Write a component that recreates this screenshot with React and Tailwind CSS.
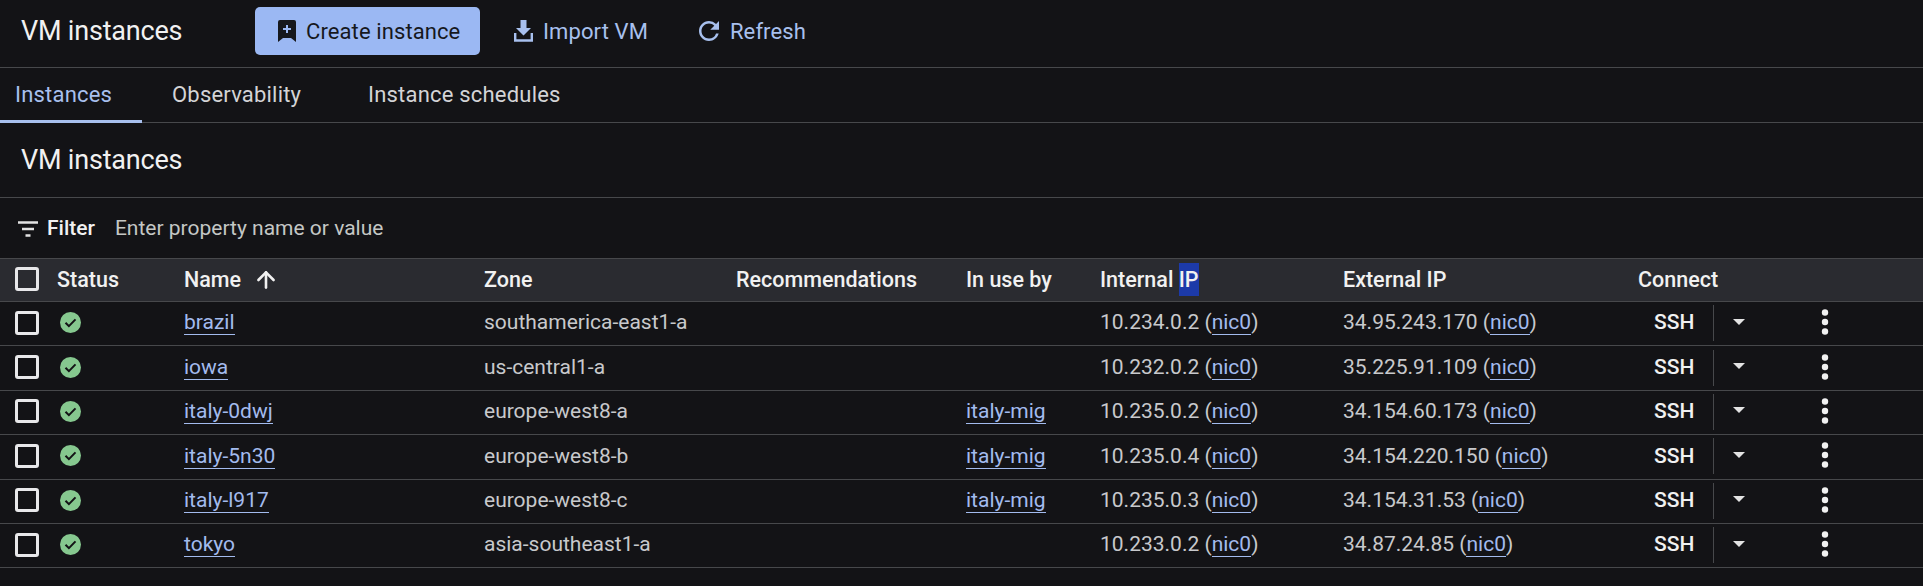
import { ArrowUp } from "lucide-react";

const rows = [
  { name: "brazil", zone: "southamerica-east1-a", inUse: "", internal: "10.234.0.2", external: "34.95.243.170" },
  { name: "iowa", zone: "us-central1-a", inUse: "", internal: "10.232.0.2", external: "35.225.91.109" },
  { name: "italy-0dwj", zone: "europe-west8-a", inUse: "italy-mig", internal: "10.235.0.2", external: "34.154.60.173" },
  { name: "italy-5n30", zone: "europe-west8-b", inUse: "italy-mig", internal: "10.235.0.4", external: "34.154.220.150" },
  { name: "italy-l917", zone: "europe-west8-c", inUse: "italy-mig", internal: "10.235.0.3", external: "34.154.31.53" },
  { name: "tokyo", zone: "asia-southeast1-a", inUse: "", internal: "10.233.0.2", external: "34.87.24.85" },
];

const cols = "grid grid-cols-[57px_127px_300px_252px_230px_134px_243px_295px_1fr] items-center";

function Checkbox() {
  return <div className="absolute left-[15px] top-1/2 -mt-[13px] w-6 h-6 rounded-[3px] border-[3px] border-[#e8e8ea]" />;
}

function StatusIcon() {
  return (
    <svg width="21" height="21" viewBox="0 0 21 21" className="ml-[3px] -mt-[1px]">
      <circle cx="10.5" cy="10.5" r="10.5" fill="#86c88f" />
      <path d="M5.5 10.8l3.4 3.4 6.6-6.8" fill="none" stroke="#131316" strokeWidth="2" />
    </svg>
  );
}

function LinkText({ children }) {
  return <span className="text-[#a3bbee] border-b border-[#a3bbee] leading-[24px] inline-block">{children}</span>;
}

export default function App() {
  return (
    <div className="w-[1923px] h-[586px] overflow-hidden bg-[#131316] text-[#e3e3e3] font-['Roboto',sans-serif]">
      <div className="h-[68px] pb-[5px] border-b border-[#47484b] flex items-center">
        <h1 className="ml-[21px] w-[234px] text-[27px] tracking-[-0.2px] text-[#f1f1f1]">VM instances</h1>
        <button className="w-[225px] h-[48px] rounded-[5px] bg-[#9bb8f3] flex items-center pl-[22px] gap-[9px] text-[#16181d] text-[22px] tracking-[0.1px]">
          <svg width="20" height="24" viewBox="0 0 20 24">
            <path d="M3 1h14a2 2 0 0 1 2 2v20l-5-4H6l-5 4V3a2 2 0 0 1 2-2z" fill="#16181d" />
            <path d="M10 6v8M6 10h8" stroke="#9bb8f3" strokeWidth="2" />
          </svg>
          Create instance
        </button>
        <div className="ml-[34px] flex items-center gap-[10px] text-[#a8c0ee] text-[22px] tracking-[0.1px]">
          <svg width="19" height="22" viewBox="0 0 19 22" fill="#a8c0ee">
            <path d="M6.5 0h6v8h4.5l-7.5 7.5L2 8h4.5z" />
            <path d="M1.2 13v7.5h16.6V13" fill="none" stroke="#a8c0ee" strokeWidth="2.4" />
          </svg>
          Import VM
        </div>
        <div className="ml-[46px] flex items-center gap-[6px] text-[#a8c0ee] text-[22px] tracking-[0.1px]">
          <svg width="30" height="30" viewBox="0 0 24 24" fill="#a8c0ee">
            <path d="M17.65 6.35A7.958 7.958 0 0 0 12 4c-4.42 0-7.99 3.58-7.99 8s3.57 8 7.99 8c3.73 0 6.84-2.55 7.73-6h-2.08A5.99 5.99 0 0 1 12 18c-3.31 0-6-2.69-6-6s2.69-6 6-6c1.66 0 3.14.69 4.22 1.78L13 11h7V4l-2.35 2.35z" />
          </svg>
          Refresh
        </div>
      </div>

      <div className="h-[55px] border-b border-[#47484b] flex text-[22px] tracking-[0.2px]">
        <div className="w-[142px] h-[55px] border-b-[3px] border-[#a8c0ee] pl-[15px] pt-[10px] text-[#a8c0ee]">Instances</div>
        <div className="ml-[30px] w-[196px] pt-[10px] text-[#d4d4d6]">Observability</div>
        <div className="pt-[10px] text-[#d4d4d6]">Instance schedules</div>
      </div>

      <div className="h-[75px] border-b border-[#47484b] flex items-center pl-[21px] text-[27px] tracking-[-0.2px] text-[#f1f1f1]">
        VM instances
      </div>

      <div className="h-[60px] pt-[1px] flex items-center pl-[18px]">
        <svg width="20" height="16" viewBox="0 0 20 16">
          <path d="M0 1.5h20M4 8h12M7.5 14.5h5" stroke="#e3e3e3" strokeWidth="2.6" />
        </svg>
        <span className="ml-[9px] text-[21px] font-medium text-[#f1f1f1]">Filter</span>
        <span className="ml-[20px] text-[21px] text-[#c4c7c5]">Enter property name or value</span>
      </div>

      <div className={`${cols} relative h-[44px] bg-[#2a2b30] border-y border-[#47484b] text-[21.5px] font-medium text-[#f1f1f1]`}>
        <Checkbox />
        <div />
        <div>Status</div>
        <div className="flex items-center gap-[12px]">
          Name <ArrowUp size={26} strokeWidth={2.4} />
        </div>
        <div>Zone</div>
        <div>Recommendations</div>
        <div>In use by</div>
        <div>
          Internal <span className="bg-[#1c3aa9] py-[4px]">IP</span>
        </div>
        <div>External IP</div>
        <div>Connect</div>
      </div>

      {rows.map((r) => (
        <div key={r.name} className={`${cols} relative h-[44.4px] pb-[1px] border-b border-[#47484b] text-[21px] text-[#c8c9cc]`}>
          <Checkbox />
          <div />
          <div><StatusIcon /></div>
          <div><LinkText>{r.name}</LinkText></div>
          <div>{r.zone}</div>
          <div />
          <div>{r.inUse && <LinkText>{r.inUse}</LinkText>}</div>
          <div>
            {r.internal} (<LinkText>nic0</LinkText>)
          </div>
          <div>
            {r.external} (<LinkText>nic0</LinkText>)
          </div>
          <div className="flex items-center pl-[16px] h-full">
            <span className="w-[59px] font-medium text-[#f1f1f1]">SSH</span>
            <div className="h-[36px] border-l border-[#47484b]" />
            <div className="ml-[19px] -mt-[3px] w-0 h-0 border-x-[6px] border-x-transparent border-t-[6px] border-t-[#e3e3e3]" />
            <svg width="8" height="26" viewBox="0 0 8 26" fill="#f1f1f1" className="ml-[76px] -mt-[2px]">
              <circle cx="4" cy="3.5" r="3.2" />
              <circle cx="4" cy="13" r="3.2" />
              <circle cx="4" cy="22.5" r="3.2" />
            </svg>
          </div>
        </div>
      ))}
    </div>
  );
}
